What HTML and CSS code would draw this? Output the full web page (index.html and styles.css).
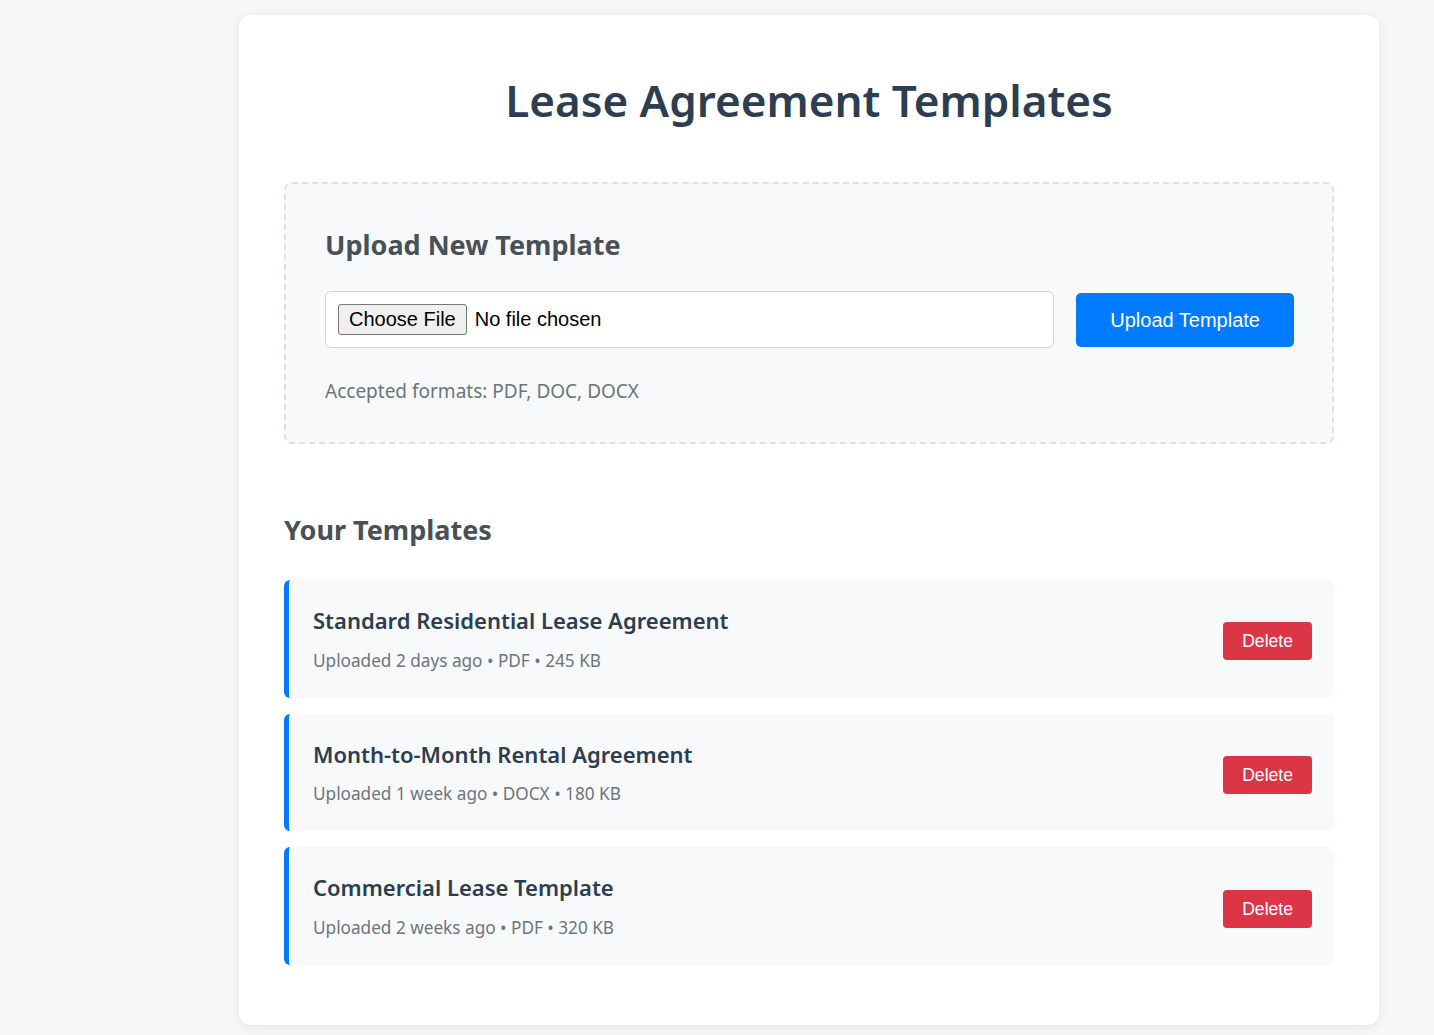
FILE: index.html
```html
<!DOCTYPE html>
<html lang="en">
<head>
<meta charset="utf-8">
<title>Lease Agreement Templates</title>
<link rel="stylesheet" href="styles.css">
</head>
<body>
<div class="container">
  <h1 class="page-title">Lease Agreement Templates</h1>

  <section class="upload-box">
    <h2 class="upload-title">Upload New Template</h2>
    <div class="upload-row">
      <input class="file-input" type="file" accept=".pdf,.doc,.docx">
      <button class="btn-upload" type="button">Upload Template</button>
    </div>
    <p class="hint">Accepted formats: PDF, DOC, DOCX</p>
  </section>

  <section class="templates">
    <h2 class="section-title">Your Templates</h2>
    <div class="template-item">
      <div class="template-info">
        <div class="template-name">Standard Residential Lease Agreement</div>
        <div class="template-meta">Uploaded 2 days ago • PDF • 245 KB</div>
      </div>
      <button class="btn-delete" type="button">Delete</button>
    </div>
    <div class="template-item">
      <div class="template-info">
        <div class="template-name">Month-to-Month Rental Agreement</div>
        <div class="template-meta">Uploaded 1 week ago • DOCX • 180 KB</div>
      </div>
      <button class="btn-delete" type="button">Delete</button>
    </div>
    <div class="template-item">
      <div class="template-info">
        <div class="template-name">Commercial Lease Template</div>
        <div class="template-meta">Uploaded 2 weeks ago • PDF • 320 KB</div>
      </div>
      <button class="btn-delete" type="button">Delete</button>
    </div>
  </section>
</div>
</body>
</html>
```

FILE: styles.css
```css
html, body {
  margin: 0;
  padding: 0;
}
body {
  background: #f7f7f7;
  font-family: "Noto Sans", "Open Sans", sans-serif;
  color: #2c3e50;
}
.container {
  box-sizing: border-box;
  width: 1140px;
  margin: 15px 0 12px 239px;
  background: #ffffff;
  border-radius: 12px;
  box-shadow: 0 2px 12px rgba(0, 0, 0, 0.08);
  padding: 59px 45px 60px;
}
.page-title {
  margin: 0 0 55px;
  text-align: center;
  font-size: 44px;
  font-weight: 600;
  line-height: 1.2;
  color: #2c3e50;
}
.upload-box {
  background: #f8f9fa;
  border: 2px dashed #dee2e6;
  border-radius: 8px;
  padding: 45px 38px 36px 39px;
}
.upload-title {
  margin: 0 0 30px;
  font-size: 27px;
  font-weight: 700;
  line-height: 1.2;
  color: #495057;
}
.upload-row {
  display: flex;
  align-items: center;
  gap: 22px;
}
.file-input {
  flex: 1;
  min-width: 0;
  box-sizing: border-box;
  padding: 12px;
  border: 1px solid #ced4da;
  border-radius: 6px;
  background: #ffffff;
  font-family: "Liberation Sans", Arial, sans-serif;
  font-size: 20px;
  line-height: 23px;
  color: #000;
}
.file-input::file-selector-button {
  font: inherit;
  line-height: 23px;
  padding: 3px 10px;
  margin: 0 8px 0 0;
  border: 1px solid #767676;
  border-radius: 3px;
  background: #efefef;
  color: #000;
}
.btn-upload {
  background: #007bff;
  color: #ffffff;
  border: none;
  border-radius: 5px;
  padding: 15px 34px;
  line-height: 24px;
  font-family: "Liberation Sans", Arial, sans-serif;
  font-size: 20px;
}
.hint {
  margin: 29px 0 0;
  font-size: 19px;
  line-height: 1.5;
  color: #6c757d;
}
.templates {
  margin-top: 70px;
}
.section-title {
  margin: 0 0 34px;
  font-size: 27px;
  font-weight: 700;
  line-height: 1.2;
  color: #495057;
}
.template-item {
  display: flex;
  align-items: center;
  justify-content: space-between;
  background: #f8f9fa;
  border-left: 5px solid #007bff;
  border-radius: 6px;
  padding: 26px 22px 25px 24px;
  margin-bottom: 16px;
}
.template-item:last-child {
  margin-bottom: 0;
}
.template-name {
  font-size: 22px;
  font-weight: 600;
  line-height: 1.3;
  color: #2c3e50;
}
.template-meta {
  margin-top: 14px;
  font-size: 17.2px;
  line-height: 1.4;
  color: #6c757d;
}
.btn-delete {
  margin-top: 4px;
  background: #dc3545;
  color: #ffffff;
  border: none;
  border-radius: 4px;
  padding: 8px 19px;
  line-height: 22px;
  font-family: "Liberation Sans", Arial, sans-serif;
  font-size: 17.6px;
}
```
